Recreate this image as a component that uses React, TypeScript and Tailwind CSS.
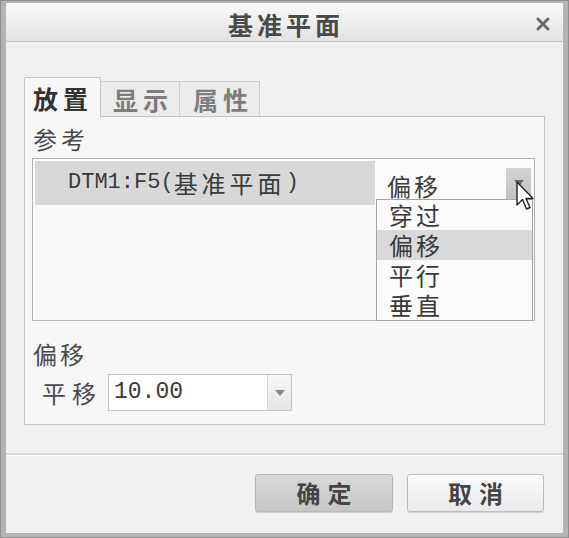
import React from "react";

const cjk = "font-['Noto_Sans_CJK_SC','Noto_Sans_CJK_JP',sans-serif]";

function Cursor() {
  return (
    <svg width="20" height="32" viewBox="0 0 20 32" className="absolute left-[516px] top-[181px]">
      <path
        d="M1 1 L1 24 L6.5 18.5 L10.5 28 L14 26.5 L10 17.5 L17 17.5 Z"
        fill="#ffffff"
        stroke="#222222"
        strokeWidth="1.4"
        strokeLinejoin="round"
      />
    </svg>
  );
}

function DownTriangle({ color = "#7a7a7a" }: { color?: string }) {
  return (
    <svg width="10" height="6" viewBox="0 0 10 6">
      <path d="M0 0 L10 0 L5 6 Z" fill={color} />
    </svg>
  );
}

const options = ["穿过", "偏移", "平行", "垂直"];

export default function App() {
  return (
    <div className={`relative w-[569px] h-[538px] bg-[#8e8e8e] p-px ${cjk}`}>
      <div className="flex h-full flex-col border-x-[5px] border-t-[2px] border-b-[4px] border-[#b4b4b4] bg-[#f0f0f0]">
        {/* title bar */}
        <div className="relative flex h-[39px] shrink-0 items-center justify-center border-b border-[#c6c6c6] bg-gradient-to-b from-[#fafafa] to-[#e2e2e2]">
          <span className="pt-[5px] pl-[3px] text-[25px] font-bold leading-none tracking-[4px] text-[#4a4a4a]">基准平面</span>
          <svg width="14" height="14" viewBox="0 0 14 14" className="absolute right-[13px] top-[14px]">
            <path d="M2 2 L12 12 M12 2 L2 12" stroke="#6a6a6a" strokeWidth="3" strokeLinecap="round" />
          </svg>
        </div>

        {/* body */}
        <div className="flex flex-1 flex-col">
          <div className="pl-[18px] pr-[18px] pt-[35px]">
            {/* tabs */}
            <div className="flex items-end">
              <div className="relative z-10 -mb-px flex h-[40px] w-[77px] items-center rounded-t-[2px] border border-b-0 border-[#c4c4c4] bg-[#f7f7f7] pl-[8px] pt-[1px]">
                <span className="text-[25px] font-bold leading-none tracking-[5px] text-[#333]">放置</span>
              </div>
              <div className="flex h-[35px] w-[79px] items-center border border-l-0 border-b-0 border-[#cfcfcf] bg-[#ececec] pl-[12px]">
                <span className="text-[25px] font-bold leading-none tracking-[5px] text-[#7d7d7d]">显示</span>
              </div>
              <div className="flex h-[35px] w-[80px] items-center border border-l-0 border-b-0 border-[#cfcfcf] bg-[#ececec] pl-[13px]">
                <span className="text-[25px] font-bold leading-none tracking-[5px] text-[#7d7d7d]">属性</span>
              </div>
            </div>

            {/* panel */}
            <div className="flex h-[309px] flex-col border border-[#c4c4c4] bg-[#f7f7f7] pl-[7px] pr-[9px]">
              <div className="pt-[10px] pl-[1px] text-[24px] leading-none tracking-[4px] text-[#4a4a4a]">参考</div>
              <div className="relative mt-[7px] h-[163px] border border-[#b2b2b2] bg-[#f9f9f9] p-[2px]">
                <div className="flex h-[44px]">
                  <div className="flex w-[340px] items-center bg-[#d8d8d8] pl-[33px] font-['Liberation_Mono','Noto_Sans_CJK_SC',monospace] text-[22px] leading-none text-[#3a3a3a]">
                    DTM1:F5(<span className={`${cjk} text-[24px] tracking-[4px]`}>基准平面</span>)
                  </div>
                  <div className="flex flex-1 items-center justify-between bg-[#fbfbfb] pl-[12px] pr-[1px]">
                    <span className="pt-[6px] text-[24px] leading-none tracking-[3px] text-[#3a3a3a]">偏移</span>
                    <div className="flex h-[31px] w-[25px] items-start justify-center bg-gradient-to-b from-[#d4d4d4] to-[#c2c2c2] pt-[12px]">
                      <DownTriangle color="#6a6a6a" />
                    </div>
                  </div>
                </div>
                {/* dropdown list */}
                <div className="absolute left-[343px] top-[40px] w-[157px] border border-[#a4a4a4] bg-[#fbfbfb]">
                  {options.map((o, i) => (
                    <div
                      key={o}
                      className={`flex h-[30px] items-center pl-[12px] text-[24px] leading-none tracking-[3px] text-[#3a3a3a] ${
                        i === 1 ? "bg-[#d9d9d9]" : ""
                      }`}
                    >
                      {o}
                    </div>
                  ))}
                </div>
              </div>

              <div className="mt-[21px] pl-[1px] text-[24px] leading-none tracking-[3px] text-[#4a4a4a]">偏移</div>
              <div className="mt-[8px] flex items-center">
                <span className="w-[76px] pl-[10px] text-[24px] leading-none tracking-[6px] text-[#4a4a4a]">平移</span>
                <div className="flex h-[37px] w-[184px] border border-[#c2c2c2] bg-white">
                  <div className="flex flex-1 items-center pl-[5px] font-['Liberation_Mono',monospace] text-[23px] leading-none text-[#3a3a3a]">
                    10.00
                  </div>
                  <div className="flex w-[24px] items-center justify-center border-l border-[#d4d4d4] bg-gradient-to-b from-[#f7f7f7] to-[#e6e6e6]">
                    <DownTriangle color="#8a8a8a" />
                  </div>
                </div>
              </div>
            </div>
          </div>

          {/* footer */}
          <div className="mt-[28px] flex flex-1 items-start justify-end gap-[14px] border-t-[2px] border-[#d6d6d6] pr-[19px] pt-[19px] shadow-[inset_0_1px_0_#ffffff]">
            <button className="flex h-[38px] w-[138px] items-center justify-center rounded-[3px] border border-[#b8b8b8] bg-gradient-to-b from-[#d9d9d9] to-[#c6c6c6] pl-[7px] text-[24px] font-bold leading-none tracking-[7px] text-[#444] shadow-[0_1px_1px_rgba(0,0,0,0.15)]">
              确定
            </button>
            <button className="flex h-[38px] w-[137px] items-center justify-center rounded-[3px] border border-[#bcbcbc] bg-gradient-to-b from-[#fbfbfb] to-[#eaeaea] pl-[7px] text-[24px] font-bold leading-none tracking-[7px] text-[#444] shadow-[0_1px_1px_rgba(0,0,0,0.12)]">
              取消
            </button>
          </div>
        </div>
      </div>
      <Cursor />
    </div>
  );
}
